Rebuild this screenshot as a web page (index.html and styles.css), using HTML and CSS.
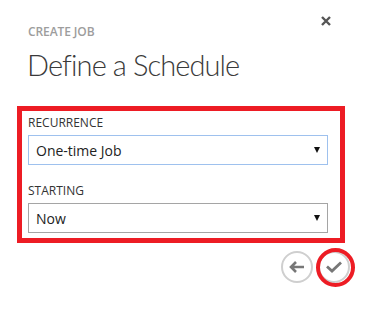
FILE: index.html
```html
<!DOCTYPE html>
<html>
<head>
<meta charset="utf-8">
<link rel="stylesheet" href="styles.css">
</head>
<body>
<div class="dialog">
  <div class="header">
    <div class="heading">
      <div class="eyebrow">CREATE JOB</div>
      <h1 class="title">Define a Schedule</h1>
    </div>
    <button class="close" aria-label="Close">
      <svg width="10" height="10" viewBox="0 0 10 10"><path d="M1 1 L9 9 M9 1 L1 9" stroke="#555" stroke-width="2.4" fill="none"/></svg>
    </button>
  </div>
  <div class="highlight">
    <div class="field">
      <div class="label">RECURRENCE</div>
      <div class="select focused"><span>One-time Job</span><span class="caret"></span></div>
    </div>
    <div class="field">
      <div class="label">STARTING</div>
      <div class="select"><span>Now</span><span class="caret"></span></div>
    </div>
  </div>
  <div class="actions">
    <button class="circle-btn" aria-label="Back">
      <svg width="18" height="14" viewBox="0 0 18 14"><path d="M16 7 H3 M8 2 L3 7 L8 12" stroke="#777" stroke-width="2.6" fill="none" stroke-linejoin="miter"/></svg>
    </button>
    <button class="circle-btn confirm" aria-label="Finish">
      <svg width="18" height="14" viewBox="0 0 18 14"><path d="M2 6.5 L7 11 L16 2.5" stroke="#777" stroke-width="2.8" fill="none"/></svg>
      <span class="ring"></span>
    </button>
  </div>
</div>
</body>
</html>
```
FILE: styles.css
```css
html, body {
  margin: 0;
  padding: 0;
  background: #fff;
}
.dialog {
  width: 381px;
  height: 312px;
  font-family: "Open Sans", "Segoe UI", sans-serif;
  box-sizing: border-box;
}
.header {
  display: flex;
  justify-content: space-between;
  align-items: flex-start;
  padding: 0 50px 0 28px;
}
.heading {
  padding-top: 24px;
}
.eyebrow {
  font-size: 12px;
  line-height: 16px;
  font-weight: 600;
  color: #9d9d9d;
  letter-spacing: -0.1px;
}
.title {
  margin: 5px 0 -1px -1px;
  font-family: "Lato", "Open Sans", sans-serif;
  font-size: 29px;
  line-height: 40px;
  font-weight: 300;
  color: #3a3a3a;
  letter-spacing: -0.9px;
}
.close {
  margin-top: 16px;
  padding: 0;
  border: 0;
  background: none;
  width: 10px;
  height: 10px;
  display: block;
}
.close svg { display: block; }
.highlight {
  margin: 22px 0 0 17px;
  width: 328px;
  box-sizing: border-box;
  border: 5px solid #ed1c24;
  padding: 4px 12px 5px 6px;
}
.field + .field {
  margin-top: 18px;
}
.label {
  font-size: 12px;
  line-height: 16px;
  color: #333;
  margin-bottom: 4px;
}
.select {
  height: 30px;
  box-sizing: border-box;
  border: 1px solid #a5a5a5;
  padding: 3px 7px 0 7px;
  font-size: 14px;
  line-height: 24px;
  color: #222;
  display: flex;
  justify-content: space-between;
  align-items: flex-start;
}
.select.focused {
  border-color: #9ec1ee;
}
.caret {
  width: 0;
  height: 0;
  border-left: 3px solid transparent;
  border-right: 3px solid transparent;
  border-top: 6px solid #111;
  margin-top: 8px;
}
.actions {
  display: flex;
  justify-content: flex-end;
  gap: 5px;
  padding-right: 31px;
  margin-top: 8px;
}
.circle-btn {
  position: relative;
  width: 32px;
  height: 32px;
  box-sizing: border-box;
  border: 2px solid #cfcfcf;
  border-radius: 50%;
  background: #fff;
  padding: 0;
  display: flex;
  align-items: center;
  justify-content: center;
}
.circle-btn svg { display: block; }
.ring {
  position: absolute;
  left: -4px;
  top: -5px;
  width: 39px;
  height: 39px;
  box-sizing: border-box;
  border: 4px solid #ed1c24;
  border-radius: 50%;
}
```
